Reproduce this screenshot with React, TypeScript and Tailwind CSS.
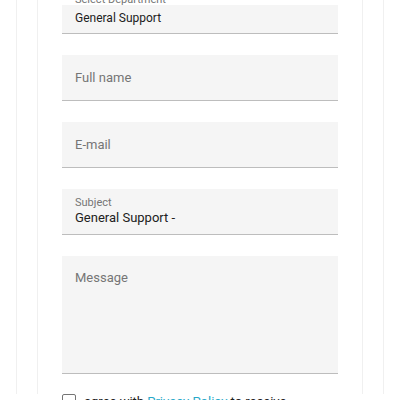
import React from 'react';

const Field: React.FC<{ placeholder: string }> = ({ placeholder }) => (
  <div className="h-[46px] bg-[#f5f5f5] border-b border-[#bdbdbd] flex items-center px-[13px]">
    <span className="text-[13px] text-[#757575]">{placeholder}</span>
  </div>
);

export default function App() {
  return (
    <div className="w-[400px] h-[400px] overflow-hidden bg-white font-['Roboto',sans-serif]">
      <div className="px-4 h-full">
        <div className="h-full border-x border-[#f0f0f0] px-5">
          <div className="h-full border-x border-[#f0f0f0] px-6">
            <div className="-mt-[6px] flex flex-col">
              {/* Department select */}
              <div className="flex flex-col">
                <span className="text-[11px] leading-[11px] text-[#757575] pl-[13px]">Select Department</span>
                <div className="h-[29px] bg-[#f5f5f5] border-b border-[#bdbdbd] flex items-center px-[13px] pb-[3px]">
                  <span className="text-[12px] text-[#212121]">General Support</span>
                </div>
              </div>

              <div className="mt-[21px] flex flex-col gap-[21px]">
                <Field placeholder="Full name" />
                <Field placeholder="E-mail" />
                <div className="h-[46px] bg-[#f5f5f5] border-b border-[#bdbdbd] flex flex-col justify-center px-[13px]">
                  <span className="text-[11px] leading-[13px] text-[#757575]">Subject</span>
                  <span className="text-[13px] leading-[18px] text-[#212121]">General Support -</span>
                </div>
              </div>

              {/* Message */}
              <div className="mt-[21px] h-[118px] bg-[#f5f5f5] border-b border-[#bdbdbd] px-[13px] pt-[9px]">
                <span className="text-[13px] leading-[16px] text-[#757575]">Message</span>
              </div>

              {/* Consent */}
              <div className="mt-[20px] flex items-start gap-2">
                <div className="w-[14px] h-[14px] border border-[#757575] rounded-[2px] shrink-0" />
                <span className="text-[13px] leading-[16px] text-[#212121]">
                  agree with <span className="text-[#29a9c9]">Privacy Policy</span> to receive
                </span>
              </div>
            </div>
          </div>
        </div>
      </div>
    </div>
  );
}
